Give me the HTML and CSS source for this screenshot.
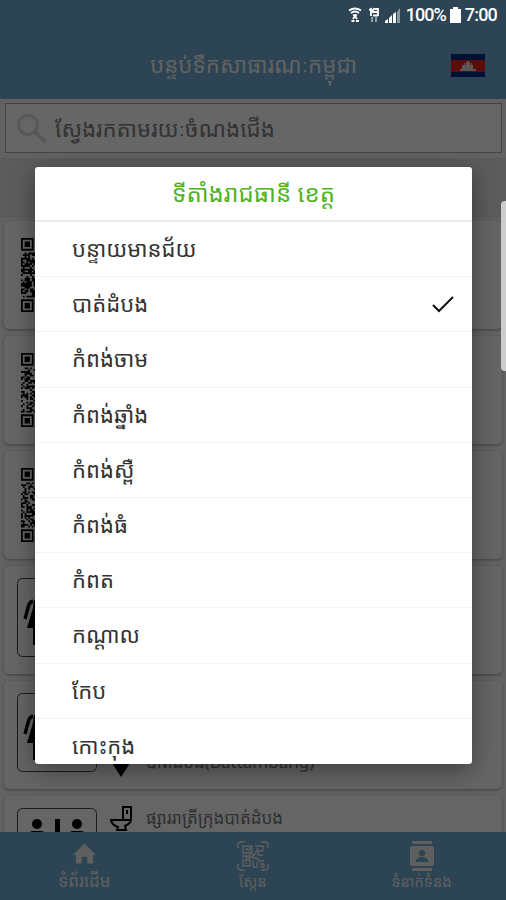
FILE: index.html
```html
<!DOCTYPE html>
<html lang="km">
  <head>
    <meta charset="utf-8">
    <title>បន្ទប់ទឹកសាធារណៈកម្ពុជា</title>
    <link rel="stylesheet" href="styles.css">
  </head>
  <body>
    <svg class="defs">
      <symbol id="people" viewBox="0 0 80 80">
        <rect x=".5" y=".5" width="79" height="78" rx="5" fill="none" stroke="#444" stroke-width="1"/>
        <path d="M16 23q-4 1-5 7L8 41" fill="none" stroke="#000" stroke-width="3.4"/>
        <path d="M22 22h-5l-1 8-6 20h6v17h3V50h3Z"/>
        <path d="M15.500 27l-4.500 15" fill="none" stroke="#fff" stroke-width="1"/>
        <circle cx="25" cy="14" r="5"/>
      </symbol>
    </svg>
    <div class="app">
      <header>
        <h1>បន្ទប់ទឹកសាធារណៈកម្ពុជា</h1>
        <svg class="flag" viewBox="0 0 34 23">
          <path fill="#002a84" d="M0 0h34v23H0z"/>
          <path fill="#e0221c" d="M0 6h34v12H0z"/>
          <path fill="#ddd" d="M9 17v-2h2v-4h2V9h1v2h1V8h1V6l1 2 1-2v2h1v3h1V9h1v2h1v4h3v2Z"/>
        </svg>
      </header>
      <div class="search">
        <svg viewBox="0 0 30 30" fill="none" stroke="#ddd">
          <circle cx="12" cy="12" r="9.5" stroke-width="3"/>
          <path d="m20 20 8 8" stroke-width="4" stroke-linecap="round"/>
        </svg>
        <span>ស្វែងរកតាមរយៈចំណងជើង</span>
      </div>
      <div class="filter"></div>
      <main>
        <div class="card"><svg class="qr" viewBox="0 0 41 41"></svg></div>
        <div class="card"><svg class="qr" viewBox="0 0 41 41"></svg></div>
        <div class="card"><svg class="qr" viewBox="0 0 41 41"></svg></div>
        <div class="card"><svg class="pic"><use href="#people"/></svg></div>
        <div class="card">
          <svg class="pic"><use href="#people"/></svg>
          <div class="info place">
            <svg viewBox="0 0 24 28"><path d="M12 28 3 14a10 10 0 1 1 18 0Z"/></svg>
            <span>បាត់ដំបង(Battambang)</span>
          </div>
        </div>
        <div class="card">
          <svg class="pic" viewBox="0 0 80 80">
            <rect x=".5" y=".5" width="79" height="79" rx="5" fill="none" stroke="#444" stroke-width="1"/>
            <circle cx="20" cy="16" r="5"/>
            <circle cx="60" cy="16" r="5"/>
            <path d="M38 11h5v50h-5zM12 35V27q0-4 4-4h8q4 0 4 4v8ZM52 35V27q0-4 4-4h8q4 0 4 4v8Z"/>
          </svg>
          <div class="info">
            <svg viewBox="0 0 24 26" fill="none" stroke="#000" stroke-width="2">
              <path d="M14 15V2h8v13q0 3-6 6l1 4H8l1-3q-6-2-7-7h20M18 5v4"/>
            </svg>
            <span>ផ្សាររាត្រីក្រុងបាត់ដំបង</span>
          </div>
        </div>
      </main>
      <nav>
        <a>
          <svg class="home" viewBox="0 0 24 22" fill="currentColor"><path d="M9 22v-7h6v7h6v-9h3L12 1 0 13h3v9Z"/></svg>
          <span>ទំព័រដើម</span>
        </a>
        <a>
          <svg class="scan" viewBox="0 0 32 30" fill="none" stroke="currentColor" stroke-width="1.4">
            <path d="M1 7V4q0-3 3-3h4M24 1h4q3 0 3 3v3M31 23v3q0 3-3 3h-4M8 29H4q-3 0-3-3v-3"/>
            <path d="M6 5h7v7H6zM18 5h8v5h-5v4h5M8 8h3v2M15 4v8l-3 3H5M6 19h7v6H6zM9 21v2M16 13v4h4l2 3h5M16 20v6h4v-5M23 23h4v3h-4M8 16l5 1 5-4 3-6"/>
          </svg>
          <span>ស្កែន</span>
        </a>
        <a>
          <svg viewBox="0 0 26 30" fill="currentColor">
            <path fill-rule="evenodd" d="M3 0h20v3H3zM3 27h20v3H3zM3 5h20q2 0 2 2v16q0 2-2 2H3q-2 0-2-2V7q0-2 2-2ZM13 9a3.2 3.2 0 1 0 .1 0ZM7 21h12v-2q-2-3-6-3t-6 3Z"/>
          </svg>
          <span>ទំនាក់ទំនង</span>
        </a>
      </nav>
    </div>
    <div class="overlay">
      <div class="status">
        <svg viewBox="0 0 14 16" width="14" height="16" fill="none" stroke="#fff" stroke-width="1.8">
          <path d="M1 3.500q6-4 12 0M3 6q4-3 8 0M5 8.500q2-1 4 0"/>
          <path d="M7 9l-2 3M7 9l2 3M3.500 14h3M8 14h3"/>
        </svg>
        <svg viewBox="0 0 10 16" width="10" height="16" fill="none" stroke="#fff" stroke-width="1.8">
          <path d="M0 3l2-1v7M4 2h5v7M4 2v3h5M4 8.500h5"/>
          <path stroke="#9aa7ae" d="M3 10v5M7 15v-5"/>
        </svg>
        <svg viewBox="0 0 16 15" width="16" height="15">
          <path fill="#fff" d="M0 15v-2l3-2v4ZM4 15v-5l3-3v8ZM8 15V6l3-2v11Z"/>
          <path fill="#8798a0" d="M12 15V4l3-4v15Z"/>
        </svg>
        <span class="percent">100%</span>
        <svg viewBox="0 0 11 16" width="11" height="16"><path fill="#fff" d="M3 0h5v2h3v14H0V2h3Z"/></svg>
        <span class="time">7:00</span>
      </div>
      <div class="edge"></div>
      <div class="dialog">
        <h2>ទីតាំងរាជធានី ខេត្ត</h2>
        <ul>
          <li>បន្ទាយមានជ័យ</li>
          <li>បាត់ដំបង
            <svg viewBox="0 0 22 17" fill="none" stroke="#111" stroke-width="2"><path d="m1 9 6 6L21 1"/></svg>
          </li>
          <li>កំពង់ចាម</li>
          <li>កំពង់ឆ្នាំង</li>
          <li>កំពង់ស្ពឺ</li>
          <li>កំពង់ធំ</li>
          <li>កំពត</li>
          <li>កណ្ដាល</li>
          <li>កែប</li>
          <li>កោះកុង</li>
        </ul>
      </div>
    </div>
    <script>
      // QR thumbnails: three finder squares and seeded filler modules
      const finder = (x, y) => `M${x} ${y}h7v7h-7zM${x + 1} ${y + 1}v5h5v-5zM${x + 2} ${y + 2}h3v3h-3z`;

      document.querySelectorAll(".qr").forEach((svg, n) => {
        let seed = 17 + n * 31;
        let d = finder(0, 0) + finder(34, 0) + finder(0, 34);
        for (let y = 0; y < 41; y++) {
          for (let x = 0; x < 41; x++) {
            seed = (seed * 16807) % 2147483647;
            const corner = (x < 8 && (y < 8 || y > 32)) || (x > 32 && y < 8);
            if (!corner && seed % 100 < 50) d += `M${x} ${y}h1v1h-1z`;
          }
        }
        svg.innerHTML = `<path d="${d}" />`;
      });
    </script>
  </body>
</html>
```
FILE: styles.css
```css
* { box-sizing: border-box; }
body {
  margin: 0;
  font-family: "Noto Sans Khmer", "Khmer OS", "Noto Sans", Roboto, sans-serif;
}
.defs { display: none; }
.app {
  display: flex;
  flex-direction: column;
  height: 900px;
  overflow: hidden;
  background: #f4f4f4;
}
header {
  flex: none;
  display: grid;
  grid-template-columns: 1fr 210px 1fr;
  align-items: center;
  height: 99px;
  padding: 31px 21px 0 22px;
  background: #6eaacf;
}
h1 {
  grid-column: 2;
  margin: 0 -5px;
  font-size: 22.3px;
  font-weight: 400;
  line-height: 36px;
  text-align: center;
  white-space: nowrap;
  color: #f4f4f4;
}
.flag {
  justify-self: end;
  width: 34px;
  height: 23px;
}
.search {
  flex: none;
  display: flex;
  align-items: center;
  gap: 9px;
  height: 50px;
  margin: 4px 4px 5px 5px;
  padding-left: 10px;
  border: 1px solid #aaa;
  background: #fff;
  color: #808080;
  font-size: 22.2px;
  white-space: nowrap;
}
.search svg {
  width: 30px;
  height: 30px;
}
.filter {
  flex: none;
  height: 60px;
  background: #e6e6e6;
}
main {
  flex: 1;
  min-height: 0;
  display: flex;
  flex-direction: column;
  gap: 7px;
  padding: 3px 4px 0;
  overflow: hidden;
}
.card {
  flex: none;
  display: flex;
  gap: 12px;
  height: 108px;
  padding: 12px 13px;
  border-radius: 5px;
  background: #fdfdfd;
  box-shadow: 0 1px 3px rgba(0, 0, 0, .35);
}
.qr {
  width: 74px;
  height: 74px;
  margin: 5px 4px;
  fill-rule: evenodd;
}
.pic {
  width: 80px;
  height: 80px;
}
.info {
  display: flex;
  gap: 13px;
  height: 26px;
  margin-top: -3px;
  line-height: 26px;
  font-size: 17px;
  color: #777;
  white-space: nowrap;
}
.info svg {
  width: 24px;
  height: 26px;
}
.place {
  margin-top: 56px;
}
.place svg { height: 28px; }
nav {
  flex: none;
  display: grid;
  grid-template-columns: repeat(3, 1fr);
  height: 68px;
  padding-top: 9px;
  background: #6eaacf;
}
nav a {
  display: flex;
  flex-direction: column;
  align-items: center;
  color: #eee;
  font-size: 15px;
  line-height: 20px;
  white-space: nowrap;
}
nav a:first-child { font-size: 17px; }
nav svg {
  width: 26px;
  height: 30px;
}
nav .scan { width: 32px; }
nav .home {
  width: 23px;
  height: 22px;
  margin: 1px 0 7px;
}
.overlay {
  position: absolute;
  top: 0;
  left: 0;
  width: 506px;
  height: 900px;
  overflow: hidden;
  background: rgba(0, 0, 0, .6);
}
.status {
  display: flex;
  align-items: center;
  justify-content: flex-end;
  height: 30px;
  padding-right: 9px;
  color: #fff;
  font: 500 18px/30px Roboto, sans-serif;
}
.status svg:nth-of-type(1) { margin-right: 7px; }
.status svg:nth-of-type(2) { margin-right: 6px; }
.percent { margin: 0 4px 0 5px; letter-spacing: -1px; }
.time { margin-left: 4px; letter-spacing: -.8px; }
.edge {
  position: absolute;
  top: 201px;
  right: -5px;
  width: 10px;
  height: 170px;
  border-radius: 4px;
  background: #ccc;
}
.dialog {
  position: absolute;
  top: 167px;
  left: 35px;
  width: 437px;
  height: 597px;
  overflow: hidden;
  border-radius: 3px;
  background: #fff;
  box-shadow: 0 6px 24px rgba(0, 0, 0, .4);
}
h2 {
  height: 55px;
  margin: 0;
  border-bottom: 2px solid #ebebeb;
  color: #4fb324;
  font-size: 24px;
  font-weight: 400;
  line-height: 52px;
  text-align: center;
}
ul {
  margin: 0;
  padding: 0;
  list-style: none;
}
li {
  display: flex;
  align-items: center;
  justify-content: space-between;
  height: 55.2px;
  padding: 0 18px 2px 37px;
  border-bottom: 1px solid #f3f3f3;
  color: #333;
  font-size: 22px;
}
li svg {
  width: 22px;
  height: 17px;
  margin-top: 2px;
}
```
